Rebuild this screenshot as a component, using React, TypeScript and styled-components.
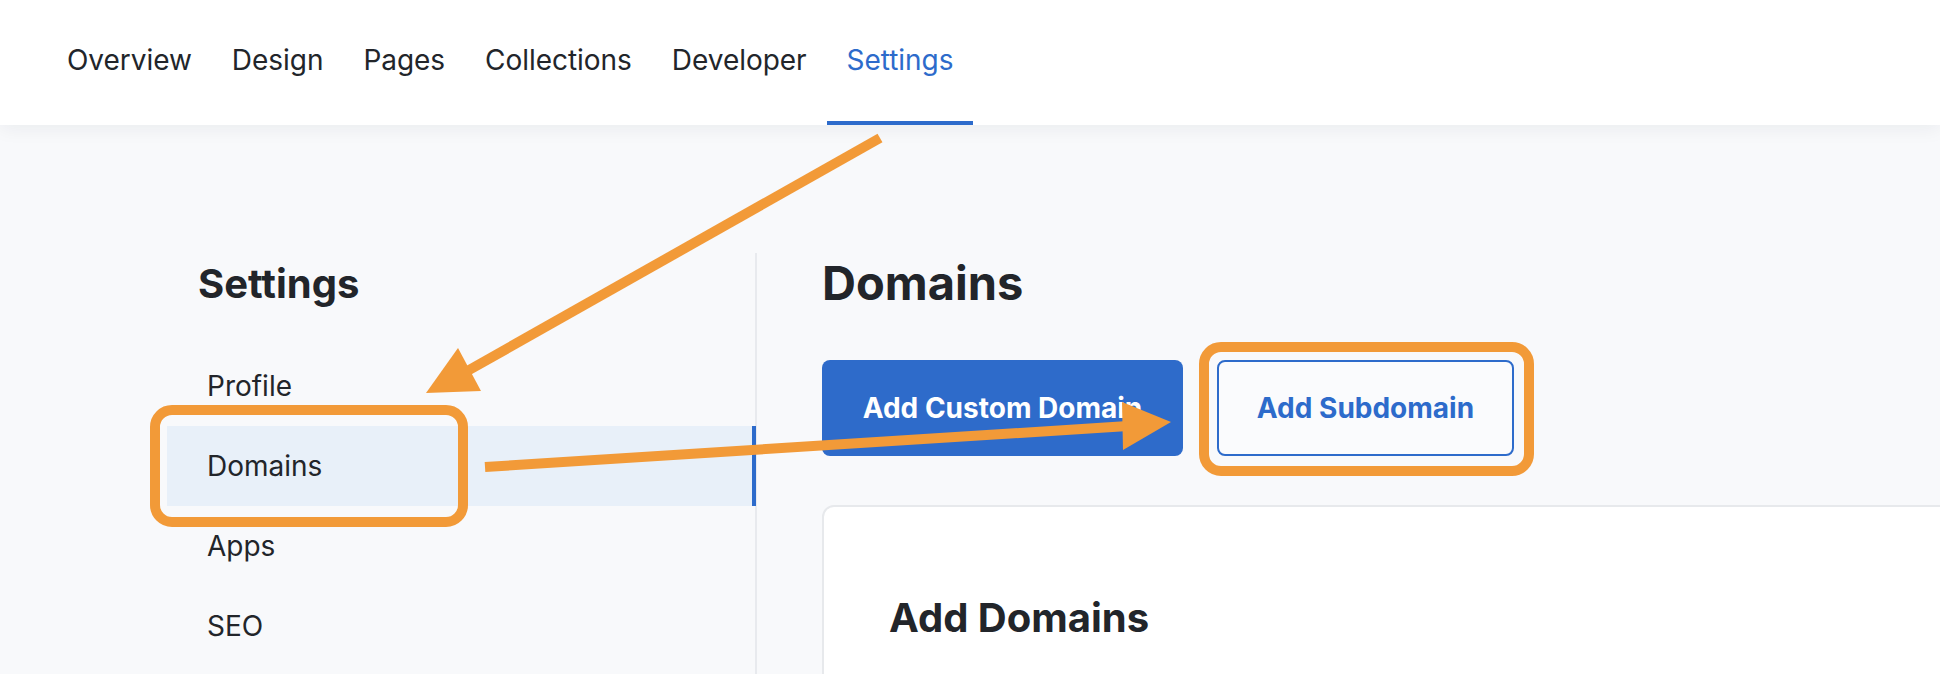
import React from 'react'
import styled, { createGlobalStyle } from 'styled-components'

const GlobalStyle = createGlobalStyle`
  html, body {
    margin: 0;
    padding: 0;
    height: 674px;
    overflow: hidden;
    background: #f8f9fb;
    font-family: Inter, 'Noto Sans', 'Liberation Sans', sans-serif;
    color: #22252a;
  }
  * {
    box-sizing: border-box;
  }
`

const navItems = ['Overview', 'Design', 'Pages', 'Collections', 'Developer', 'Settings']
const sideItems = ['Profile', 'Domains', 'Apps', 'SEO']

const ORANGE = '#f29a38'

const App = () => {
  return (
    <>
      <GlobalStyle />
      <Page>
        <Header>
          <Nav>
            {navItems.map((item) => (
              <NavItem key={item} $active={item === 'Settings'}>
                {item}
              </NavItem>
            ))}
          </Nav>
        </Header>

        <Body>
          {/* 사이드바 */}
          <Sidebar>
            <SideTitle>Settings</SideTitle>
            <SideList>
              {sideItems.map((item) => (
                <SideItem key={item} $active={item === 'Domains'}>
                  {item}
                </SideItem>
              ))}
            </SideList>
          </Sidebar>

          {/* 본문 */}
          <Main>
            <MainTitle>Domains</MainTitle>
            <ButtonRow>
              <PrimaryBtn>Add Custom Domain</PrimaryBtn>
              <OutlineBtn>Add Subdomain</OutlineBtn>
            </ButtonRow>
            <Card>
              <CardTitle>Add Domains</CardTitle>
            </Card>
          </Main>
        </Body>

        {/* 안내 표시 */}
        <Annotations viewBox='0 0 1940 674' width='1940' height='674'>
          <rect x='155' y='410' width='308' height='112' rx='17' fill='none' stroke={ORANGE} strokeWidth='10' />
          <rect x='1204' y='347' width='325' height='124' rx='17' fill='none' stroke={ORANGE} strokeWidth='10' />
          <line x1='880' y1='138' x2='462' y2='374' stroke={ORANGE} strokeWidth='10' />
          <polygon points='426,393 458,348 481,391' fill={ORANGE} />
          <line x1='485' y1='467' x2='1128' y2='426' stroke={ORANGE} strokeWidth='10' />
          <polygon points='1171,422 1122,402 1123,450' fill={ORANGE} />
        </Annotations>
      </Page>
    </>
  )
}

export default App

const Page = styled.div`
  position: relative;
  width: 1940px;
  height: 674px;
  overflow: hidden;
`

// 상단 메뉴
const Header = styled.header`
  position: relative;
  z-index: 1;
  height: 125px;
  background: #ffffff;
  box-shadow: 0 4px 18px rgba(20, 30, 50, 0.06);
`
const Nav = styled.nav`
  display: flex;
  height: 100%;
  padding-left: 47px;
`
const NavItem = styled.div<{ $active?: boolean }>`
  display: flex;
  align-items: center;
  height: 100%;
  padding: 4px 20px 6px;
  font-size: 28px;
  font-weight: 400;
  letter-spacing: -0.04px;
  color: ${({ $active }) => ($active ? '#2d6bcb' : '#22252a')};
  border-bottom: 4px solid ${({ $active }) => ($active ? '#2d6bcb' : 'transparent')};
`

const Body = styled.div`
  display: flex;
  padding-top: 128px;
`

// 사이드바
const Sidebar = styled.aside`
  flex: none;
  width: 590px;
  margin-left: 167px;
  height: 500px;
  border-right: 2px solid #e8eaee;
`
const SideTitle = styled.h2`
  margin: 0;
  padding: 7px 0 0 31px;
  font-size: 40px;
  line-height: 48px;
  font-weight: 700;
`
const SideList = styled.ul`
  list-style: none;
  margin: 38px 0 0;
  padding: 0;
`
const SideItem = styled.li<{ $active?: boolean }>`
  display: flex;
  align-items: center;
  height: 80px;
  padding-left: 40px;
  font-size: 28px;
  background: ${({ $active }) => ($active ? '#e8f0f9' : 'transparent')};
  border-right: 4px solid ${({ $active }) => ($active ? '#2d6bcb' : 'transparent')};
  margin-right: -1px;
`

// 본문
const Main = styled.main`
  flex: 1;
  min-width: 0;
  padding-left: 65px;
`
const MainTitle = styled.h1`
  margin: 5px 0 0;
  font-size: 47px;
  line-height: 50px;
  font-weight: 700;
`
const ButtonRow = styled.div`
  display: flex;
  gap: 34px;
  margin-top: 52px;
`
const BaseBtn = styled.button`
  flex: none;
  height: 96px;
  border-radius: 8px;
  font-family: inherit;
  font-size: 28px;
  font-weight: 700;
  cursor: pointer;
`
const PrimaryBtn = styled(BaseBtn)`
  width: 361px;
  background: #2e6bca;
  color: #ffffff;
  border: none;
`
const OutlineBtn = styled(BaseBtn)`
  width: 297px;
  background: #fafbfd;
  color: #2d6bcb;
  border: 2px solid #2d6bcb;
`
const Card = styled.section`
  width: 1300px;
  height: 300px;
  margin-top: 49px;
  padding: 87px 0 0 65px;
  background: #ffffff;
  border: 2px solid #e7e9ec;
  border-radius: 12px;
`
const CardTitle = styled.h3`
  margin: 0;
  font-size: 40px;
  line-height: 47px;
  font-weight: 700;
`

const Annotations = styled.svg`
  position: absolute;
  top: 0;
  left: 0;
  z-index: 2;
  pointer-events: none;
`
